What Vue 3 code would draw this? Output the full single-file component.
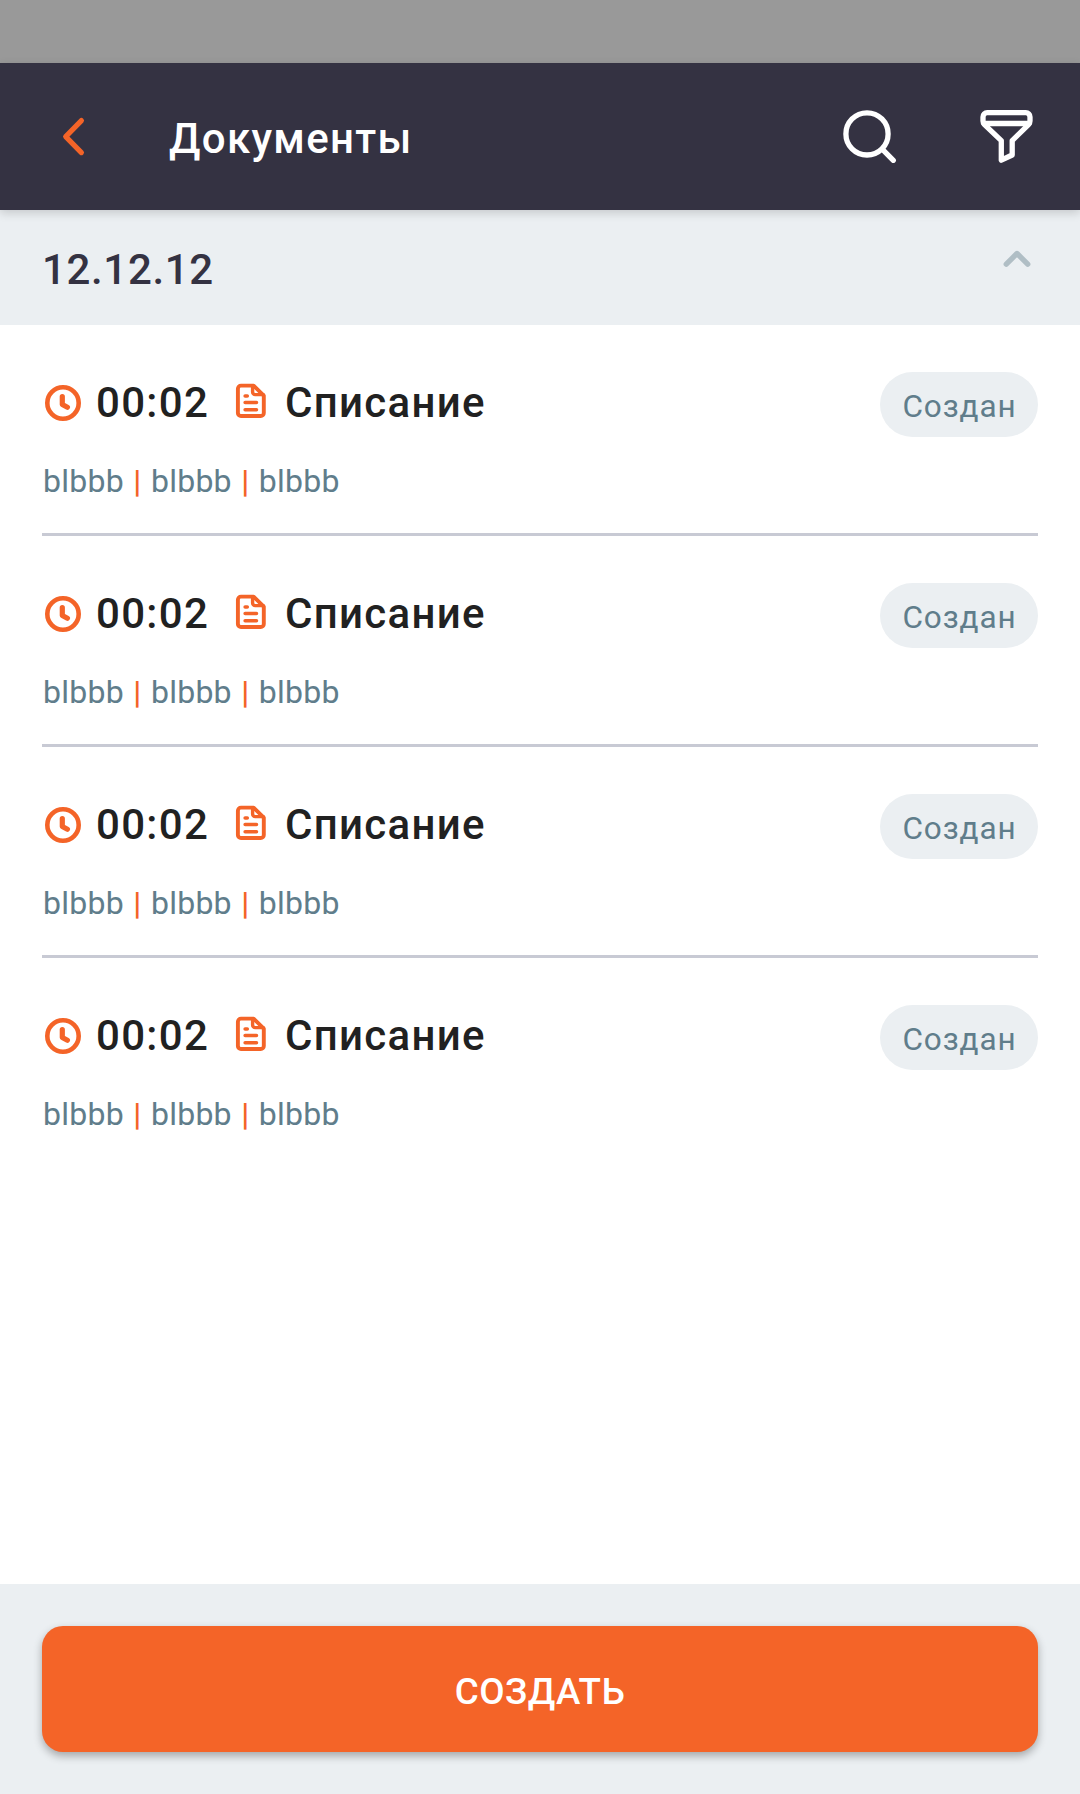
<script setup>
const documents = Array.from({ length: 4 }, (_, id) => ({
  id,
  time: '00:02',
  type: 'Списание',
  status: 'Создан',
  details: ['blbbb', 'blbbb', 'blbbb'],
}))
</script>

<template>
  <div class="screen">
    <div class="status-bar"></div>
    <header class="toolbar">
      <svg class="back" viewBox="0 0 63 63" fill="none" stroke="#f46428" stroke-width="5.2" stroke-linecap="round" stroke-linejoin="round">
        <path d="M39.4 15.6 23.7 31.6 39.4 47.6" />
      </svg>
      <h1 class="title">Документы</h1>
      <svg class="action" viewBox="0 0 63 63" fill="none" stroke="#fff" stroke-width="5.3" stroke-linecap="round" stroke-linejoin="round">
        <circle cx="29" cy="28.9" r="21.1" />
        <path d="M44.2 44.1 55.3 55.3" />
      </svg>
      <svg class="action" viewBox="0 0 63 63" fill="none" stroke="#fff" stroke-width="5.3" stroke-linecap="round" stroke-linejoin="round">
        <path d="M12.2 7.7H50.8A4.2 4.2 0 0 1 55 11.9V16C55 17.5 54.5 18.6 53.5 19.6L37.2 35.6V50L26.3 55.2V35.6L9.5 19.6C8.5 18.6 8 17.5 8 16V11.9A4.2 4.2 0 0 1 12.2 7.7Z" />
        <path d="M9 18.5H54" />
      </svg>
    </header>

    <main class="content">
      <div class="date-header">
        <span class="date">12.12.12</span>
        <svg class="caret" viewBox="0 0 42 42" fill="none" stroke="#b0bec5" stroke-width="5.4" stroke-linecap="round" stroke-linejoin="round">
          <path d="M10.3 26.2 21 15.5 31.7 26.2" />
        </svg>
      </div>

      <ul class="list">
        <li v-for="doc in documents" :key="doc.id" class="item">
          <div class="row">
            <svg class="clock" viewBox="0 0 42 42" fill="none" stroke="#f46428" stroke-width="4.6" stroke-linecap="round" stroke-linejoin="round">
              <circle cx="21" cy="21" r="15.7" />
              <path d="M20.3 14.6V22.4L25.4 25.3" stroke-width="5.2" />
            </svg>
            <span class="time">{{ doc.time }}</span>
            <svg class="file" viewBox="0 0 42 42" fill="none" stroke="#f46428" stroke-width="3.9" stroke-linecap="round" stroke-linejoin="round">
              <path d="M23.6 5.6H11A3.1 3.1 0 0 0 7.9 8.7V32.9A3.1 3.1 0 0 0 11 36H30.7A3.1 3.1 0 0 0 33.8 32.9V15.6Z" />
              <path d="M22.6 5.8V12A2.6 2.6 0 0 0 25.2 14.6H33.4" stroke-width="3.4" />
              <path d="M15.1 16H17.3M15.1 22.6H26.5M15.1 29.7H26.5" stroke-width="3.5" />
            </svg>
            <span class="type">{{ doc.type }}</span>
            <span class="chip">{{ doc.status }}</span>
          </div>
          <p class="details">
            <template v-for="(part, i) in doc.details" :key="i">
              <span v-if="i" class="separator">|</span>
              <span>{{ part }}</span>
            </template>
          </p>
        </li>
      </ul>
    </main>

    <footer class="footer">
      <button class="create" type="button">СОЗДАТЬ</button>
    </footer>
  </div>
</template>

<style>
body {
  margin: 0;
}
</style>

<style scoped>
.screen {
  display: flex;
  flex-direction: column;
  width: 1080px;
  height: 1794px;
  overflow: hidden;
  background: #fff;
  font-family: Roboto, "Noto Sans", sans-serif;
}

.status-bar {
  height: 63px;
  background: #999;
}

.toolbar {
  position: relative;
  display: flex;
  align-items: center;
  gap: 74px;
  box-sizing: border-box;
  height: 147px;
  padding: 0 42px;
  background: #343242;
  box-shadow: 0 3px 9px rgba(0, 0, 0, 0.16);
}

.back,
.action {
  flex: none;
  width: 63px;
  height: 63px;
}

.title {
  flex: 1;
  margin: 0 0 0 -10px;
  padding-top: 5px;
  color: #fff;
  font-size: 42px;
  font-weight: 500;
  line-height: 50px;
  letter-spacing: 1.31px;
}

.content {
  flex: 1;
}

.date-header {
  display: flex;
  justify-content: space-between;
  box-sizing: border-box;
  height: 115px;
  padding: 28px 42px 0;
  background: #ebeff2;
}

.date {
  color: #343242;
  font-size: 42px;
  font-weight: 500;
  line-height: 63px;
  letter-spacing: 0.65px;
}

.caret {
  width: 42px;
  height: 42px;
}

.list {
  margin: 0;
  padding: 0 42px;
  list-style: none;
}

.item {
  box-sizing: border-box;
  height: 211px;
  padding-top: 47px;
  border-bottom: 3px solid #c8cad4;
}

.item:last-child {
  border-bottom: 0;
}

.row {
  display: flex;
  align-items: center;
  height: 65px;
}

.clock,
.file {
  flex: none;
  width: 42px;
  height: 42px;
}

.clock {
  margin-top: -3px;
}

.file {
  margin: -7px 0 0 20px;
}

.time,
.type {
  color: #212121;
  font-size: 42px;
  font-weight: 500;
  line-height: 60px;
  letter-spacing: 1.31px;
  margin-top: -3px;
}

.time {
  width: 114px;
  margin-left: 12px;
}

.type {
  margin-left: 13px;
}

.chip {
  box-sizing: border-box;
  width: 158px;
  height: 65px;
  margin-left: auto;
  padding: 2px 0 0 1px;
  border-radius: 33px;
  background: #ebeff2;
  color: #607d8b;
  font-size: 31.5px;
  line-height: 65px;
  letter-spacing: 0.9px;
  text-align: center;
}

.details {
  display: flex;
  margin: 24px 0 0 1px;
  color: #607d8b;
  font-size: 32px;
  line-height: 41px;
  letter-spacing: 0.25px;
}

.separator {
  width: 27px;
  color: #f46428;
  font-weight: 500;
  text-align: center;
}

.footer {
  box-sizing: border-box;
  height: 210px;
  padding: 42px;
  background: #ebeff2;
}

.create {
  display: block;
  width: 100%;
  height: 126px;
  padding: 4px 0 0;
  border: 0;
  border-radius: 21px;
  background: #f46428;
  box-shadow: 0 4px 9px rgba(0, 0, 0, 0.3);
  color: #fff;
  font-family: inherit;
  font-size: 36.75px;
  font-weight: 500;
  letter-spacing: 0.45px;
}
</style>
